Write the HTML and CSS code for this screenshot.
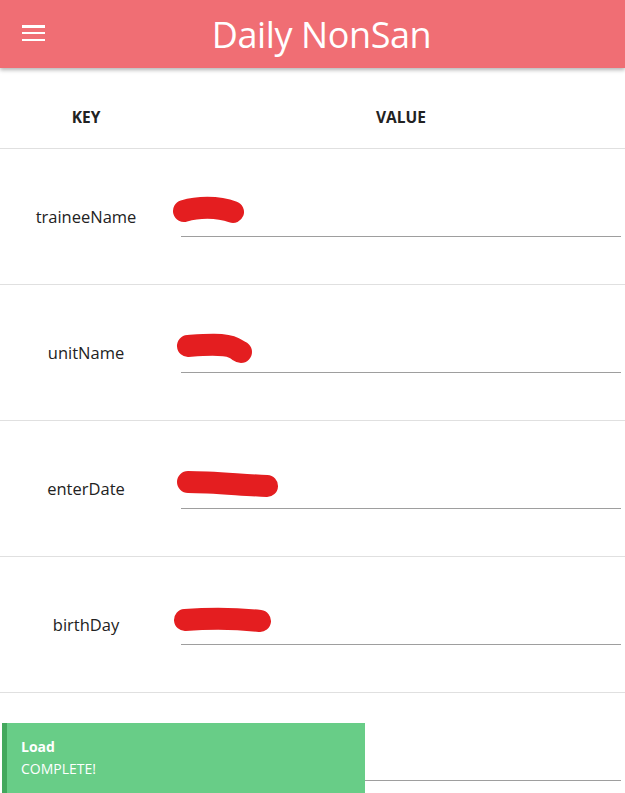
FILE: index.html
```html
<!DOCTYPE html>
<html>
<head>
<meta charset="utf-8">
<link rel="stylesheet" href="styles.css">
</head>
<body>
<header class="appbar">
  <button class="menu-btn" aria-label="menu">
    <span></span><span></span><span></span>
  </button>
  <h1 class="title">Daily NonSan</h1>
</header>
<main class="table">
  <div class="row head">
    <div class="key">KEY</div>
    <div class="value">VALUE</div>
  </div>
  <div class="row">
    <div class="key">traineeName</div>
    <div class="value"><div class="field"></div>
      <svg class="scribble" viewBox="0 0 453 136"><path d="M12 62 C25 58, 45 57, 61 63"/></svg>
    </div>
  </div>
  <div class="row">
    <div class="key">unitName</div>
    <div class="value"><div class="field"></div>
      <svg class="scribble" viewBox="0 0 453 136"><path d="M16 61 C30 60, 52 58, 62 63 C66 65, 68 67, 69 67"/></svg>
    </div>
  </div>
  <div class="row">
    <div class="key">enterDate</div>
    <div class="value"><div class="field"></div>
      <svg class="scribble" viewBox="0 0 453 136"><path d="M16 61 C40 61, 70 64, 95 65"/></svg>
    </div>
  </div>
  <div class="row">
    <div class="key">birthDay</div>
    <div class="value"><div class="field"></div>
      <svg class="scribble" viewBox="0 0 453 136"><path d="M13 63 C40 61, 70 62, 88 64"/></svg>
    </div>
  </div>
  <div class="row">
    <div class="key">&nbsp;</div>
    <div class="value"><div class="field"></div></div>
  </div>
</main>
<div class="toast">
  <div class="toast-title">Load</div>
  <div class="toast-msg">COMPLETE!</div>
</div>
</body>
</html>
```
FILE: styles.css
```css
* { box-sizing: border-box; }
html, body { margin: 0; padding: 0; }
body {
  font-family: "Open Sans", "Noto Sans", sans-serif;
  color: #222;
  background: #fff;
  width: 625px;
  overflow: hidden;
}
.appbar {
  height: 68px;
  background: #f06e74;
  display: flex;
  align-items: center;
  justify-content: center;
  box-shadow: 0 2px 4px rgba(0,0,0,0.3);
  position: relative;
  z-index: 2;
}
.menu-btn {
  position: absolute;
  left: 22px;
  top: 25px;
  width: 23px;
  height: 16px;
  padding: 0;
  border: 0;
  background: none;
  display: flex;
  flex-direction: column;
  justify-content: space-between;
}
.menu-btn span {
  display: block;
  height: 2.5px;
  background: #fff;
}
.title {
  margin: 0;
  font-weight: 400;
  font-size: 36px;
  color: #fff;
  letter-spacing: -0.4px;
  transform: translateX(9px);
}
.row {
  display: grid;
  grid-template-columns: 172px 1fr;
  height: 136px;
  border-bottom: 1px solid #e0e0e0;
  align-items: center;
}
.row.head {
  height: 81px;
  padding-top: 17px;
  font-weight: 700;
  font-size: 15.5px;
  color: #222;
}
.key {
  text-align: center;
  font-size: 16.5px;
}
.row.head .key { font-size: 15.5px; }
.value {
  position: relative;
  height: 100%;
  display: flex;
  align-items: flex-start;
  padding: 42px 4px 0 9px;
}
.row.head .value {
  justify-content: center;
  align-items: center;
  padding-top: 0;
}
.field {
  width: 100%;
  height: 46px;
  border-bottom: 1px solid #9e9e9e;
}
.scribble {
  position: absolute;
  left: 0;
  top: 0;
  width: 453px;
  height: 136px;
  fill: none;
  stroke: #e41e20;
  stroke-width: 22;
  stroke-linecap: round;
  stroke-linejoin: round;
}
.toast {
  position: fixed;
  left: 2px;
  top: 723px;
  width: 363px;
  height: 70px;
  background: #68cd87;
  border-left: 5px solid #43a85d;
  color: #fff;
  padding: 13px 0 0 14px;
  font-size: 14px;
  line-height: 22px;
  z-index: 3;
}
.toast-title { font-weight: 700; }
```
